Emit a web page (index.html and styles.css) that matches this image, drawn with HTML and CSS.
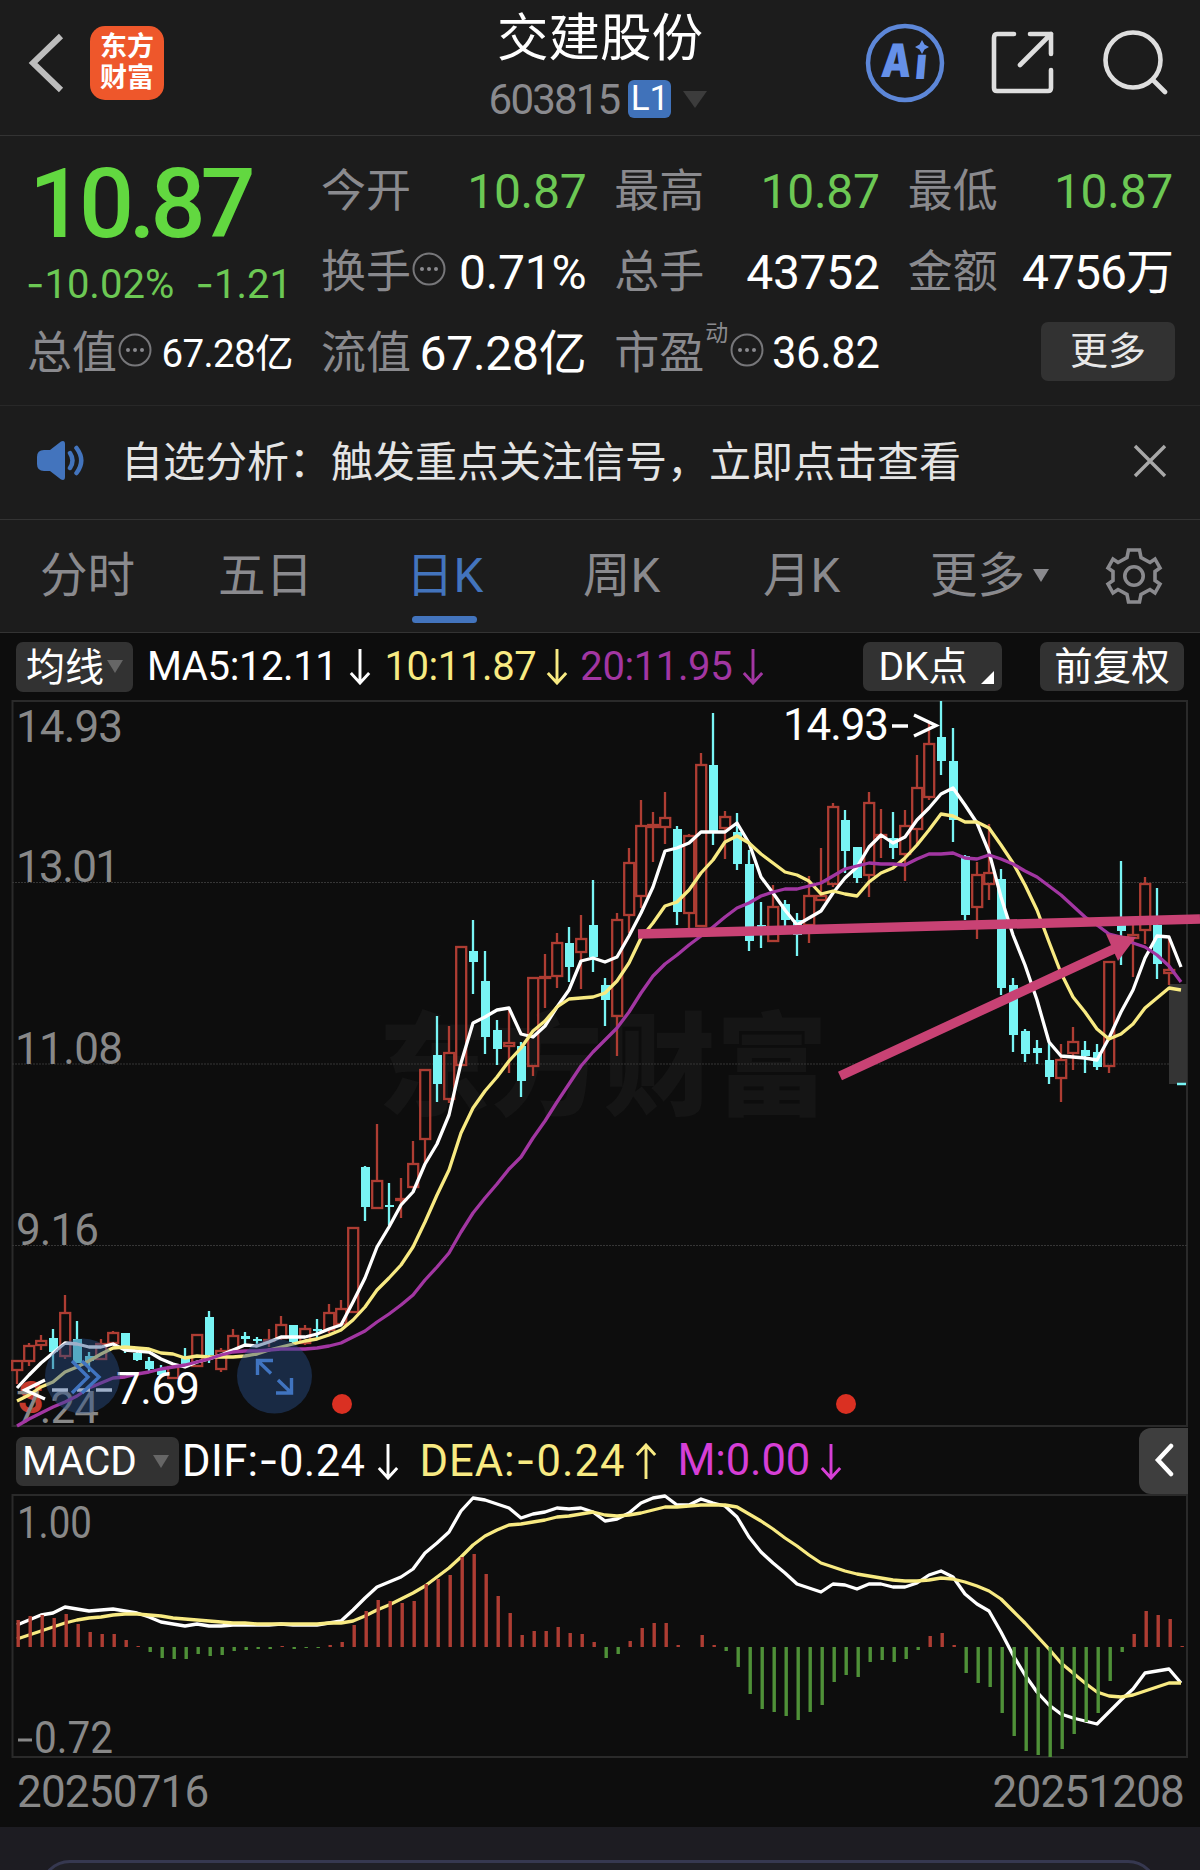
FILE: index.html
```html
<!DOCTYPE html>
<html lang="zh-CN">

<head>
    <meta charset="UTF-8">
    <meta name="viewport" content="width=device-width, initial-scale=1.0">
    <title>交建股份 603815</title>
    <link rel="stylesheet" href="styles.css">
</head>

<body>

    <!-- shared icons -->
    <svg class="defs" width="0" height="0">
        <symbol id="arrow" viewBox="0 0 24 40">
            <path d="M12 1V37M2 27L12 38L22 27" fill="none" stroke="currentColor" stroke-width="3.2" />
        </symbol>
        <symbol id="dots" viewBox="0 0 34 34">
            <circle cx="17" cy="17" r="15.5" fill="none" stroke="#77777a" stroke-width="2" />
            <circle cx="10" cy="17" r="2" fill="#8a8a8e" />
            <circle cx="17" cy="17" r="2" fill="#8a8a8e" />
            <circle cx="24" cy="17" r="2" fill="#8a8a8e" />
        </symbol>
    </svg>

    <header class="topbar">
        <div class="topbar-left">
            <svg class="back" width="36" height="62" viewBox="0 0 36 62">
                <path d="M33 4L5 31L33 58" fill="none" stroke="#bdbdbd" stroke-width="6" />
            </svg>
            <div class="logo"><span>东方</span><span>财富</span></div>
        </div>
        <div class="stock">
            <h1>交建股份</h1>
            <div class="code"><span class="num">603815</span><span class="badge">L1</span><i class="caret"></i></div>
        </div>
        <div class="topbar-right">
            <svg width="80" height="80" viewBox="0 0 80 80">
                <circle cx="40" cy="40" r="37" fill="none" stroke="#5d87d8" stroke-width="4.5" />
                <g class="ai" transform="translate(5 0) skewX(-5)">
                    <text x="15" y="54" textLength="30" lengthAdjust="spacingAndGlyphs">A</text>
                    <text class="ai-i" x="49" y="55">ı</text>
                </g>
                <path d="M57 17L59.5 21.5L64 24L59.5 26.5L57 31L54.5 26.5L50 24L54.5 21.5Z" fill="#6590e8" />
            </svg>
            <svg width="64" height="64" viewBox="0 0 64 64" fill="none" stroke="#dedede" stroke-width="4.6" stroke-linecap="round" stroke-linejoin="round">
                <path d="M24 3H7Q4 3 4 7V57Q4 60 7 60H58Q61 60 61 57V39" />
                <path d="M40 3H61V23M61 3L30 34" />
            </svg>
            <svg width="66" height="66" viewBox="0 0 66 66" fill="none" stroke="#dedede" stroke-width="4.6" stroke-linecap="round">
                <circle cx="31" cy="30" r="27.5" />
                <path d="M51 50L63 62" />
            </svg>
        </div>
    </header>

    <section class="quote">
        <div class="price-box">
            <div class="price">10.87</div>
            <div class="change"><span><b>-</b>10.02%</span><span><b>-</b>1.21</span></div>
        </div>
        <div class="cell"><label>今开</label><span class="green">10.87</span></div>
        <div class="cell"><label>最高</label><span class="green">10.87</span></div>
        <div class="cell"><label>最低</label><span class="green">10.87</span></div>
        <div class="cell"><label>换手</label><svg class="info"><use href="#dots" /></svg><span>0.71%</span></div>
        <div class="cell"><label>总手</label><span>43752</span></div>
        <div class="cell"><label>金额</label><span class="tight">4756万</span></div>
        <div class="cell"><label>总值</label><svg class="info"><use href="#dots" /></svg><span class="small">67.28亿</span></div>
        <div class="cell"><label>流值</label><span>67.28亿</span></div>
        <div class="cell"><label>市盈<sup>动</sup></label><svg class="info pe"><use href="#dots" /></svg><span class="mid">36.82</span></div>
        <div class="cell"><button class="more">更多</button></div>
    </section>

    <section class="notice">
        <svg width="50" height="42" viewBox="0 0 50 42">
            <path d="M1 17Q1 10 8 10H14L25 1.5Q29 0 29 4V37Q29 41 25 39.5L14 31H8Q1 31 1 24Z" fill="#4374bd" />
            <path d="M34 13Q39 20.500 34 28M40.500 8Q50 20.500 40.500 33" fill="none" stroke="#4374bd" stroke-width="4.500" stroke-linecap="round" />
        </svg>
        <p>自选分析：触发重点关注信号，立即点击查看</p>
        <svg class="close" width="34" height="34" viewBox="0 0 34 34">
            <path d="M2 2L32 32M32 2L2 32" stroke="#a8a8a8" stroke-width="3.4" />
        </svg>
    </section>

    <nav class="tabs">
        <a>分时</a>
        <a>五日</a>
        <a class="active">日K</a>
        <a>周K</a>
        <a>月K</a>
        <a>更多<i class="caret"></i></a>
        <svg class="gear" width="60" height="60" viewBox="-30 -30 60 60" fill="none" stroke="#8a8a8e" stroke-width="3.6">
            <path d="M-5.500 -26H5.500L7 -18.500L16 -13.500L21 -17L26 -8L21 -4.500V4.500L26 8L21 17L16 13.500L7 18.500L5.500 26H-5.500L-7 18.500L-16 13.500L-21 17L-26 8L-21 4.500V-4.500L-26 -8L-21 -17L-16 -13.500L-7 -18.500Z" />
            <circle r="9.200" />
        </svg>
    </nav>

    <main class="charts">
        <div class="legend ma">
            <button class="pick"><span>均线</span><i class="caret"></i></button>
            <span class="w">MA5:12.11</span><svg class="arr w"><use href="#arrow" /></svg>
            <span class="y">10:11.87</span><svg class="arr y"><use href="#arrow" /></svg>
            <span class="p">20:11.95</span><svg class="arr p"><use href="#arrow" /></svg>
            <button class="dk">DK点<i></i></button>
            <button class="fq">前复权</button>
        </div>

        <svg id="kline" width="1200" height="728" viewBox="0 700 1200 728"></svg>

        <div class="legend macd">
            <button class="pick">MACD<i class="caret"></i></button>
            <span class="w">DIF:<b>-</b>0.24</span><svg class="arr w"><use href="#arrow" /></svg>
            <span class="y">DEA:<b>-</b>0.24</span><svg class="arr up y"><use href="#arrow" /></svg>
            <span class="m">M:0.00</span><svg class="arr m"><use href="#arrow" /></svg>
            <button class="fold">
                <svg width="20" height="34" viewBox="0 0 20 34"><path d="M17 3L4 17L17 31" fill="none" stroke="#fff" stroke-width="4.500" stroke-linecap="round" /></svg>
            </button>
        </div>

        <svg id="macd" width="1200" height="266" viewBox="0 1494 1200 266"></svg>

        <div class="dates"><span>20250716</span><span>20251208</span></div>
    </main>

    <footer class="bottom"><div class="bottom-card"></div></footer>

    <script src="script.js"></script>
</body>
</html>
```

FILE: styles.css
```css
* {
    box-sizing: border-box;
}

body {
    margin: 0;
    width: 1200px;
    height: 1870px;
    overflow: hidden;
    background-color: #1c1c1c;
    color: #ffffff;
    font-family: Roboto, "Noto Sans CJK SC", sans-serif;
}

button {
    border: none;
    padding: 0;
    color: #ffffff;
    font-family: inherit;
    background-color: #323232;
    border-radius: 7px;
}

b {
    font-family: Inter, sans-serif;
    font-weight: 400;
}

.defs {
    position: absolute;
}

.caret {
    display: inline-block;
    border-left: 8px solid transparent;
    border-right: 8px solid transparent;
    border-top: 13px solid #666666;
}

/* top bar */
.topbar {
    display: grid;
    grid-template-columns: 400px 400px 400px;
    height: 136px;
    border-bottom: 1px solid #333333;
}

.topbar-left {
    display: flex;
    align-items: center;
    padding: 0 0 10px 28px;
}

.logo {
    display: flex;
    flex-direction: column;
    align-items: center;
    justify-content: center;
    width: 74px;
    height: 74px;
    margin-left: 26px;
    border-radius: 15px;
    background-color: #ee572b;
    font-size: 27px;
    font-weight: 700;
    line-height: 31px;
}

.stock {
    display: flex;
    flex-direction: column;
    align-items: center;
}

.stock h1 {
    margin: 9px 0 0;
    font-size: 51.5px;
    font-weight: 400;
    line-height: 60px;
}

.code {
    display: flex;
    align-items: center;
    height: 60px;
    margin-left: -4px;
    font-size: 42px;
    color: #8a8a8e;
}

.code .num {
    letter-spacing: -1.8px;
}

.badge {
    width: 43px;
    height: 38px;
    margin-left: 9px;
    border-radius: 6px;
    background-color: #4072ba;
    color: #ffffff;
    font-size: 35px;
    line-height: 38px;
    text-align: center;
}

.code .caret {
    margin-left: 12px;
    border-left-width: 12px;
    border-right-width: 12px;
    border-top: 17px solid #3c3c3c;
}

.topbar-right {
    display: flex;
    align-items: center;
    justify-content: flex-end;
    padding: 0 32px 10px 0;
}

.topbar-right svg:nth-child(2) {
    margin: 0 48px 0 45px;
}

.ai {
    font-family: Inter, sans-serif;
    font-size: 46px;
    font-weight: 900;
    fill: #6590e8;
}

.ai-i {
    font-family: "Liberation Sans", sans-serif;
    font-size: 42px;
    font-weight: 700;
    stroke: #6590e8;
    stroke-width: 2px;
}

/* quote */
.quote {
    display: grid;
    grid-template-columns: 266px repeat(3, 1fr);
    grid-template-rows: repeat(3, 81px);
    column-gap: 28px;
    height: 270px;
    padding: 15px 27px 0 27px;
    border-bottom: 1px solid #282828;
}

.price-box {
    grid-row: span 2;
}

.price {
    height: 106px;
    padding-left: 2px;
    font-size: 97px;
    font-weight: 500;
    line-height: 106px;
    letter-spacing: -5.2px;
    color: #62d840;
}

.change {
    display: flex;
    justify-content: space-between;
    margin-left: -1px;
    padding-right: 1px;
    font-size: 40px;
    line-height: 54px;
    color: #6cc854;
}

.cell {
    display: flex;
    align-items: center;
    white-space: nowrap;
    font-size: 48px;
    line-height: 60px;
    letter-spacing: -0.3px;
}

.cell label {
    position: relative;
    font-size: 45px;
    letter-spacing: 0;
    color: #8a8a8e;
}

.cell label sup {
    position: absolute;
    left: 91px;
    top: -20px;
    font-size: 23px;
    line-height: 60px;
}

.cell span {
    margin-left: auto;
}

.cell .green {
    color: #6cc854;
}

.cell .small {
    font-size: 38.5px;
    letter-spacing: -0.6px;
}

.cell .tight {
    letter-spacing: -1px;
}

.cell .mid {
    font-size: 43.5px;
}

.info {
    width: 34px;
    height: 34px;
    margin: -7px 0 0 1px;
}

.info.pe {
    margin-left: 26px;
}

.more {
    width: 134px;
    height: 59px;
    margin: -4px -2px 0 auto;
    font-size: 38px;
    line-height: 59px;
    color: #e8e8e8;
}

/* notice */
.notice {
    display: flex;
    align-items: center;
    height: 114px;
    padding: 0 33px 3px 36px;
    border-bottom: 1px solid #333333;
}

.notice p {
    margin: -6px 0 0 35px;
    font-size: 42px;
    color: #e4e4e4;
}

.close {
    margin-left: auto;
}

/* tabs */
.tabs {
    display: flex;
    align-items: center;
    height: 113px;
    padding-left: 40px;
    border-bottom: 1px solid #333333;
    font-size: 47.5px;
    line-height: 117px;
    color: #8a8a8e;
}

.tabs a {
    width: 178px;
    white-space: nowrap;
}

.tabs a:nth-child(2) {
    width: 188px;
}

.tabs a:nth-child(3) {
    width: 177px;
}

.tabs a:nth-child(4) {
    width: 180px;
}

.tabs a:nth-child(5) {
    width: 167px;
}

.tabs .active {
    position: relative;
    color: #4374bd;
}

.tabs .active::after {
    content: "";
    position: absolute;
    left: 6px;
    bottom: 12px;
    width: 65px;
    height: 7px;
    border-radius: 4px;
    background-color: #4374bd;
}

.tabs .caret {
    margin: 0 0 10px 8px;
    border-top-color: #8a8a8e;
}

.gear {
    margin-left: -4px;
}

/* charts */
.charts {
    height: 1194px;
    background-color: #0d0d0d;
}

.legend {
    display: flex;
    align-items: center;
    height: 67px;
    padding: 0 12px 0 16px;
    font-size: 40px;
    letter-spacing: -0.4px;
    white-space: nowrap;
}

.legend.macd {
    height: 66px;
    font-size: 43.5px;
    letter-spacing: 0.4px;
}

.legend.macd > span {
    margin-top: -2px;
}

.w { color: #ffffff; }
.y { color: #f8ea82; }
.p { color: #a236a2; }
.m { color: #d63fd6; }

.arr {
    width: 22px;
    height: 37px;
    margin: 0 20px 0 12px;
}

.macd .up {
    margin: 0 20px 0 10px;
}

.ma .arr {
    margin: 0 13px 0 12px;
}

.ma .arr.y {
    margin: 0 12px 0 10px;
}

.ma .arr.p {
    margin-left: 10px;
}

.arr.up {
    transform: rotate(180deg);
}

.macd span.y {
    letter-spacing: 1px;
}

.macd span.m {
    letter-spacing: -0.1px;
}

.macd .arr.m {
    margin-left: 10px;
}

.pick {
    display: flex;
    align-items: center;
    width: 117px;
    height: 50px;
    padding-left: 10px;
    margin-right: 14px;
    font-size: 39px;
}

.pick span {
    margin-top: -5px;
}

.pick .caret {
    margin-left: 3px;
}

.macd .pick {
    width: 163px;
    height: 49px;
    padding-left: 6px;
    margin-right: 3px;
    font-size: 40.5px;
    letter-spacing: 0;
}

.macd .caret {
    margin-left: 16px;
}

.dk {
    position: relative;
    width: 139px;
    height: 49px;
    margin-left: auto;
    margin-right: 38px;
    padding-right: 19px;
    font-size: 39px;
    line-height: 48px;
}

.dk i {
    position: absolute;
    right: 8px;
    bottom: 7px;
    border-left: 13px solid transparent;
    border-bottom: 13px solid #ffffff;
}

.fq {
    width: 144px;
    height: 49px;
    margin-right: 4px;
    font-size: 38.500px;
    line-height: 48px;
}

.fold {
    width: 49px;
    height: 66px;
    margin-left: auto;
    border-radius: 12px 0 0 12px;
    background-color: #3e3e3e;
}

#kline,
#macd {
    display: block;
}

.axis {
    font-size: 44px;
    fill: #888888;
}

.mark {
    font-size: 44px;
    fill: #ffffff;
}

.watermark {
    font-size: 112px;
    font-weight: 900;
    fill: #151515;
}

.sell {
    font-size: 44px;
    font-weight: 700;
    fill: #c43a2c;
}

.dates {
    display: flex;
    justify-content: space-between;
    padding: 0 16px 0 17px;
    font-size: 44px;
    line-height: 64px;
    letter-spacing: -0.8px;
    color: #888888;
}

/* bottom panel */
.bottom {
    height: 43px;
    padding: 33px 42px 0 40px;
    background-color: #1d1c22;
    overflow: hidden;
}

.bottom-card {
    height: 90px;
    border: 3px solid #363850;
    border-radius: 30px;
    background-color: #202026;
}
```

FILE: script.js
```javascript
const RED = '#ae3d33';
const CYAN = '#78f4f4';
const STEP = 12;
const START = 17;

// [direction, high, body top, body bottom, low]
const candles = [
    [1,1361,1361,1370,1384],[1,1343,1346,1361,1366],[1,1335,1341,1345,1350],[0,1329,1338,1352,1369],[1,1295,1313,1356,1359],
    [0,1321,1339,1363,1363],[0,1352,1356,1361,1372],[1,1339,1344,1359,1359],[1,1331,1333,1343,1344],[0,1333,1333,1350,1353],
    [0,1350,1353,1360,1361],[0,1357,1361,1369,1373],[0,1365,1370,1375,1375],[1,1363,1367,1378,1379],[0,1348,1358,1364,1366],
    [1,1335,1335,1366,1367],[0,1311,1317,1355,1363],[1,1348,1351,1369,1372],[1,1329,1336,1350,1352],[0,1332,1336,1339,1344],
    [0,1337,1339,1340,1344],[1,1329,1340,1341,1347],[1,1316,1325,1338,1340],[0,1325,1325,1342,1344],[1,1325,1329,1343,1345],
    [0,1319,1329,1331,1340],[1,1304,1313,1330,1333],[1,1300,1309,1324,1326],[1,1228,1228,1312,1312],[0,1166,1167,1207,1221],
    [1,1124,1181,1208,1208],[0,1183,1205,1206,1225],[1,1178,1199,1200,1218],[1,1141,1164,1187,1187],[1,1070,1070,1139,1163],
    [0,1016,1055,1084,1102],[1,1026,1053,1099,1103],[1,946,947,1065,1066],[0,920,951,962,994],[0,951,981,1037,1054],
    [0,1020,1030,1049,1065],[1,1008,1043,1046,1073],[0,1042,1046,1081,1097],[1,978,978,1066,1076],[1,954,977,978,1008],
    [1,933,943,976,988],[0,927,943,967,982],[1,915,939,952,989],[0,880,925,957,972],[0,978,985,1000,1026],
    [1,913,920,1016,1056],[1,848,863,915,933],[1,800,826,896,908],[1,812,825,827,862],[1,792,818,827,844],
    [0,826,829,912,925],[1,834,836,913,928],[1,753,765,926,927],[0,713,765,833,845],[1,811,817,828,859],
    [0,813,832,864,870],[0,850,864,941,951],[0,902,925,927,948],[1,885,907,941,941],[0,900,904,920,927],
    [0,913,920,935,956],[1,876,896,925,943],[1,848,896,900,900],[1,803,807,884,887],[0,810,820,851,873],
    [0,847,847,878,883],[1,792,803,875,897],[1,809,835,836,858],[0,812,838,848,859],[1,810,826,854,881],
    [1,755,788,829,845],[1,723,744,797,800],[0,701,737,761,775],[0,728,761,820,842],[0,855,856,915,920],
    [1,862,875,907,939],[1,824,873,884,900],[0,869,879,988,995],[0,978,985,1035,1052],[0,1029,1031,1054,1062],
    [0,1040,1048,1053,1064],[0,1043,1060,1077,1084],[1,1044,1060,1078,1102],[1,1027,1042,1053,1070],[0,1041,1050,1056,1073],
    [0,1044,1052,1067,1070],[1,962,962,1066,1073],[0,861,925,931,965],[1,925,935,938,977],[1,877,884,930,944],
    [0,888,925,964,979],[1,939,970,973,985]
];

const ma5 = [1388,1375,1363,1353,1343,1344,1347,1347,1344,1350,1351,1352,1359,1364,1367,1362,1359,1355,1350,1345,1346,1342,1337,1337,1337,1334,1329,1325,1302,1278,
    1247,1227,1205,1192,1164,1144,1115,1063,1023,1017,1010,1008,1034,1037,1026,1007,990,961,958,962,957,936,913,887,851,848,843,832,832,832,
    823,843,877,893,910,925,918,911,893,878,867,847,835,843,837,820,808,794,788,805,823,852,897,935,965,1000,1042,1056,1057,1058,
    1060,1038,1012,990,958,936,937,967];
const ma10 = [1401,1395,1387,1382,1372,1367,1361,1354,1348,1347,1348,1349,1353,1354,1358,1356,1357,1357,1357,1356,1354,1350,1347,1344,1341,1339,1335,1330,1320,1307,
    1290,1278,1265,1247,1222,1195,1170,1133,1108,1091,1077,1061,1048,1031,1021,1007,999,998,997,993,981,963,938,923,906,902,890,873,860,842,
    836,843,854,863,872,875,881,894,891,894,896,882,873,868,858,845,830,814,816,822,822,828,845,863,885,910,942,973,997,1012,
    1029,1039,1034,1024,1008,998,988,990];
const ma20 = [1426,1419,1413,1407,1402,1396,1388,1383,1378,1377,1374,1372,1369,1367,1365,1362,1359,1355,1352,1351,1351,1350,1349,1349,1349,1348,1346,1343,1337,1331,
    1322,1314,1305,1295,1280,1267,1253,1232,1213,1198,1184,1169,1157,1138,1121,1102,1084,1066,1052,1040,1028,1012,993,976,964,955,945,936,927,917,
    908,903,896,892,889,889,886,883,876,869,866,863,864,864,865,859,854,854,853,858,859,855,859,864,871,877,886,895,906,917,
    925,934,937,943,947,955,966,982];

const bars = [27,31,32,29,33,23,15,13,13,7,1,-5,-11,-12,-12,-7,-9,-8,-4,-3,-2,-2,1,-2,-1,-1,2,5,22,36,
    47,46,44,46,63,68,72,90,93,73,51,34,12,16,16,20,14,13,5,-11,-7,6,19,24,24,2,0,12,2,-4,
    -20,-47,-62,-65,-69,-73,-65,-58,-35,-28,-30,-15,-13,-15,-12,-3,11,14,2,-26,-36,-40,-66,-89,-104,-108,-110,-102,-87,-75,
    -66,-34,-5,13,36,32,28,1];
const dif = [1625,1620,1615,1613,1607,1609,1611,1610,1609,1611,1613,1617,1622,1624,1626,1624,1626,1626,1625,1625,1625,1625,1624,1625,1625,1625,1623,1621,1610,1598,
    1587,1582,1577,1569,1553,1543,1532,1511,1498,1500,1504,1508,1518,1514,1512,1508,1509,1508,1512,1521,1519,1513,1503,1498,1496,1505,1505,1499,1503,1506,
    1517,1537,1552,1563,1573,1584,1588,1592,1584,1585,1589,1584,1584,1587,1587,1583,1575,1571,1577,1594,1604,1611,1632,1655,1675,1692,1705,1714,1718,1721,
    1724,1712,1700,1689,1673,1671,1669,1683];
const dea = [1639,1635,1631,1627,1623,1620,1618,1617,1615,1614,1614,1615,1616,1618,1619,1620,1621,1622,1623,1623,1624,1624,1624,1624,1624,1624,1623,1623,1621,1616,
    1610,1605,1599,1593,1586,1577,1568,1557,1545,1536,1530,1525,1524,1522,1520,1517,1516,1514,1512,1515,1516,1515,1513,1510,1507,1507,1506,1505,1505,1505,
    1507,1514,1521,1529,1538,1546,1555,1563,1567,1571,1574,1576,1578,1580,1581,1581,1580,1578,1579,1582,1586,1591,1599,1611,1623,1636,1649,1663,1673,1683,
    1692,1696,1697,1695,1691,1687,1683,1683];

function line(values, color) {
    const points = values.map((y, i) => `${START + i * STEP},${y}`).join(' ');
    return `<polyline points="${points}" fill="none" stroke="${color}" stroke-width="3.3" stroke-linejoin="round"/>`;
}

function candle(c, i) {
    const [up, high, top, bottom, low] = c;
    const x = START + i * STEP;
    if (up) {
        const h = Math.max(bottom - top, 1);
        return `<path d="M${x} ${high}V${top}M${x} ${bottom}V${low}" stroke="${RED}" stroke-width="2.3"/>
            <rect x="${x - 4.8}" y="${top}" width="10" height="${h}" fill="none" stroke="${RED}" stroke-width="2.3"/>`;
    }
    return `<path d="M${x} ${high}V${low}" stroke="${CYAN}" stroke-width="2.3"/>
        <rect x="${x - 4}" y="${top}" width="9" height="${Math.max(bottom - top, 2)}" fill="${CYAN}"/>`;
}

function drawKline() {
    let s = '<text class="watermark" x="378" y="1107" textLength="450">东方财富</text>';
    s += '<rect x="12.5" y="701" width="1174.5" height="725" fill="none" stroke="#2a2a2a" stroke-width="2"/>';
    [882.5, 1064, 1245.5].forEach(y => {
        s += `<path d="M12 ${y}H1187" stroke="#363636" stroke-width="1" stroke-dasharray="2 1"/>`;
    });
    s += '<rect x="1169" y="984" width="18" height="100" fill="#343434"/>';
    s += '<path d="M1177 1084H1186" stroke="#78f4f4" stroke-width="2.5"/>';
    s += '<text class="sell" x="18" y="1413" textLength="25" lengthAdjust="spacingAndGlyphs">S</text>';
    s += candles.map(candle).join('');
    s += '<text class="axis" x="16" y="742" textLength="107">14.93</text>';
    s += '<text class="axis" x="16" y="882" textLength="104">13.01</text>';
    s += '<text class="axis" x="15" y="1064" textLength="108">11.08</text>';
    s += '<text class="axis" x="16" y="1245" textLength="83">9.16</text>';
    s += '<text class="axis" x="16" y="1423" textLength="83">7.24</text>';
    s += line(ma5, '#ffffff') + line(ma10, '#f8ea82') + line(ma20, '#a236a2');

    // high / low marks
    s += '<text class="mark" x="783" y="740" textLength="106">14.93</text>';
    s += '<path d="M892 726H908M914 715L936 725.500L914 736" fill="none" stroke="#fff" stroke-width="3.4"/>';
    s += '<path d="M45 1380L25 1390L45 1399M52 1390H68M77 1390H90M96 1390H112" fill="none" stroke="#fff" stroke-width="3.4"/>';
    s += '<text class="mark" x="116" y="1404" textLength="84">7.69</text>';

    // round buttons
    s += '<g fill="rgba(40,77,135,0.45)"><circle cx="82.500" cy="1376" r="37.500"/><circle cx="274.500" cy="1376" r="37.500"/></g>';
    s += `<g fill="none" stroke="#4074c0" stroke-width="3.4"><path d="M72 1361L88 1377L72 1393M82 1361L99 1377L82 1393"/>
        <path d="M257.500 1375V1360.500H273M257.500 1360.500L271 1373.500M276 1393H291.500V1378M291.500 1393L278 1380"/></g>`;
    s += '<g fill="#da3022"><circle cx="342" cy="1404" r="10"/><circle cx="846" cy="1404" r="10"/></g>';

    // hand drawn trend line and arrow
    s += '<path d="M638 934L1200 919M840 1076L1116 948" stroke="#c84274" stroke-width="9.500"/>';
    s += '<path d="M1106 934L1136 937L1118 961Z" fill="#c84274"/>';
    document.getElementById('kline').innerHTML = s;
}

function drawMacd() {
    let s = '<rect x="12.500" y="1495" width="1174.500" height="262" fill="none" stroke="#2a2a2a" stroke-width="2"/>';
    s += line(dif, '#ffffff') + line(dea, '#f8ea82');
    bars.forEach((v, i) => {
        const x = START - 0.5 + i * STEP;
        s += `<rect x="${x}" y="${v > 0 ? 1647 - v : 1647}" width="3.4" height="${Math.abs(v)}" fill="${v > 0 ? RED : '#4f9138'}"/>`;
    });
    s += '<text class="axis" x="17" y="1538" textLength="75" lengthAdjust="spacingAndGlyphs">1.00</text>';
    s += '<path d="M18 1740H32" stroke="#888" stroke-width="3"/>';
    s += '<text class="axis" x="34" y="1753" textLength="79" lengthAdjust="spacingAndGlyphs">0.72</text>';
    document.getElementById('macd').innerHTML = s;
}

drawKline();
drawMacd();
```
